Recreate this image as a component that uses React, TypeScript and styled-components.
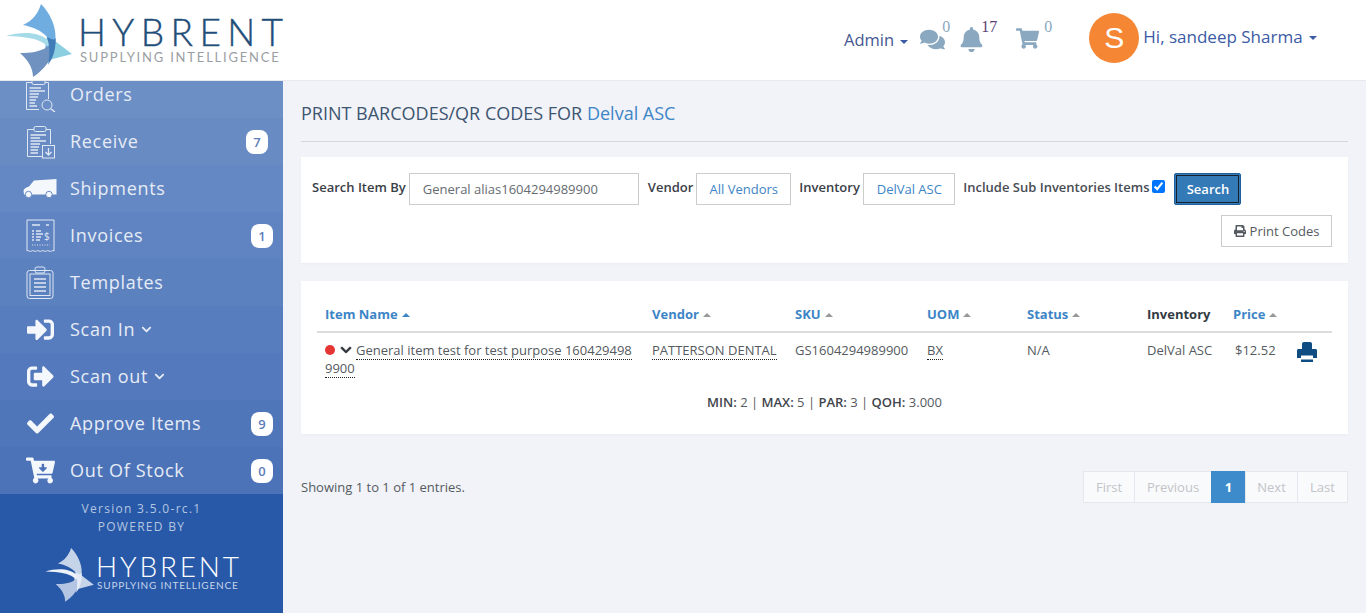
import React from "react";
import styled, { createGlobalStyle } from "styled-components";
import {
  FaBell,
  FaCartArrowDown,
  FaCheck,
  FaChevronDown,
  FaComments,
  FaPrint,
  FaShoppingCart,
  FaSignInAlt,
  FaSignOutAlt,
} from "react-icons/fa";

const GlobalStyle = createGlobalStyle`
  html, body {
    margin: 0;
    padding: 0;
    height: 100%;
    overflow: hidden;
    background: #f1f3f8;
    font-family: "Open Sans", "Liberation Sans", sans-serif;
  }
  * { box-sizing: border-box; }
`;

function LogoMark({ className, light }: { className?: string; light?: boolean }) {
  return (
    <svg className={className} viewBox="0 0 75 80">
      <path
        d="M41 4C50 13 56 26 55.500 38C55 47 50 52 44 55L47 37C42 31 33 27 23 25C32 21 38 14 41 4Z"
        fill={light ? "#c6d4ea" : "#6fade0"}
      />
      <path
        d="M6 36C22 31 40 32 49 41C54 46 56 52 56 58C52 48 44 42 34 39C25 37 15 36 6 36Z"
        fill={light ? "#eef2f9" : "#a5dbe8"}
      />
      <path
        d="M55 41L72 54L49 60C51 54 54 47 55 41Z"
        fill={light ? "#c6d4ea" : "#8ccfe0"}
      />
      <path
        d="M20 53C30 53 40 52 47 47C52 43 55 40 55.500 38C56 50 50 66 33 77C33 68 28 60 20 53Z"
        fill={light ? "#b3c5e2" : "#6f92c0"}
      />
      <path
        d="M47 37C51 39 54 41 55.500 38C56 50 53 58 48 65C50 56 50 46 47 37Z"
        fill={light ? "#e4ebf6" : "#3f7cb8"}
      />
    </svg>
  );
}

function OrdersIcon() {
  return (
    <svg width="31" height="34" viewBox="0 0 31 34" fill="none" stroke="#dfe7f4" strokeWidth="1">
      <path d="M23.500 21V4.500H20M7 4.500H1.500V31.500H14" />
      <rect x="7" y="2" width="13" height="4.500" rx="1.500" />
      <path d="M4.500 10H16M4.500 13H20M4.500 16H14M4.500 19H13M4.500 22H11M4.500 25H10M4.500 28H12" strokeWidth="1.400" />
      <circle cx="22" cy="27" r="5" />
      <path d="M25.500 30.500L30 34" strokeWidth="1.500" />
    </svg>
  );
}

function ReceiveIcon() {
  return (
    <svg width="29" height="34" viewBox="0 0 29 34" fill="none" stroke="#dfe7f4" strokeWidth="1">
      <path d="M24.500 19V4.500H20M8 4.500H1.500V31.500H16" />
      <rect x="8" y="1.500" width="12" height="5" rx="1.500" />
      <path d="M4.500 10H20M4.500 13H14M4.500 16H20M4.500 19H14M4.500 22H13M4.500 25H12M4.500 28H12" strokeWidth="1.400" />
      <rect x="16.500" y="20.500" width="12" height="12.500" />
      <path d="M22.500 23V30M19.500 27L22.500 30L25.500 27" strokeWidth="1.300" />
    </svg>
  );
}

function InvoiceIcon() {
  return (
    <svg width="29" height="34" viewBox="0 0 29 34" fill="none" stroke="#dfe7f4" strokeWidth="1">
      <path d="M1 32V1H28V32C26 30.500 25 33.500 23 32C21 30.500 20 33.500 18 32C16 30.500 15 33.500 13 32C11 30.500 10 33.500 8 32C6 30.500 5 33.500 3 32C2 31.500 1.500 31.500 1 32Z" />
      <path d="M6 6H14M20 6H23" strokeWidth="1.400" />
      <path d="M6 12H8M10 12H15M6 15H8M10 15H17M6 18H8M10 18H15M6 21H8M10 21H14" strokeWidth="1.300" />
      <path d="M6 26H24" strokeDasharray="1 1.500" />
      <text x="18" y="21" fontSize="10" fill="#dfe7f4" stroke="none" fontFamily="Open Sans">$</text>
    </svg>
  );
}

function TemplateIcon() {
  return (
    <svg width="28" height="34" viewBox="0 0 28 34" fill="none" stroke="#dfe7f4" strokeWidth="1">
      <rect x="1" y="4.500" width="26" height="28" rx="2.500" />
      <rect x="4" y="8" width="20" height="21.500" />
      <rect x="9" y="1" width="10" height="6" rx="2" />
      <path d="M8 13H20M8 17H20M8 21H20M8 25H20" strokeWidth="1.400" />
    </svg>
  );
}

function VanIcon() {
  return (
    <svg width="34" height="19" viewBox="0 0 34 19">
      <path d="M11 1.500L33.500 0V15.500H1L0.500 11.500C1 9.500 3 8.500 6 7.500L11 1.500Z" fill="#f4f7fb" />
      <circle cx="5.500" cy="15.500" r="3.200" fill="#f4f7fb" stroke="#6a8cc2" />
      <circle cx="26" cy="15.500" r="3.200" fill="#f4f7fb" stroke="#6a8cc2" />
    </svg>
  );
}

function SolidPrinter({ className }: { className?: string }) {
  return (
    <svg className={className} viewBox="0 0 20 20">
      <path d="M5 7V2C5 .800 5.800 0 7 0H13C14.200 0 15 .800 15 2V7Z" />
      <path d="M1.500 7H18.500C19.400 7 20 7.600 20 8.500V16H16V13.500H4V16H0V8.500C0 7.600 .600 7 1.500 7Z" />
      <path d="M4 17.500H16V20H4Z" />
    </svg>
  );
}

type NavEntry = {
  label: string;
  icon: React.ReactNode;
  chevron?: boolean;
  badge?: string;
  badgeInset?: number;
};

const navEntries: NavEntry[] = [
  { label: "Orders", icon: <OrdersIcon /> },
  { label: "Receive", icon: <ReceiveIcon />, badge: "7", badgeInset: 15 },
  { label: "Shipments", icon: <VanIcon /> },
  { label: "Invoices", icon: <InvoiceIcon />, badge: "1" },
  { label: "Templates", icon: <TemplateIcon /> },
  { label: "Scan In", icon: <FaSignInAlt size={27} />, chevron: true },
  { label: "Scan out", icon: <FaSignOutAlt size={27} />, chevron: true },
  { label: "Approve Items", icon: <FaCheck size={27} />, badge: "9" },
  { label: "Out Of Stock", icon: <FaCartArrowDown size={29} />, badge: "0" },
];

const columns = [
  { title: "Item Name", width: 327, sort: "active" },
  { title: "Vendor", width: 143, sort: "idle" },
  { title: "SKU", width: 132, sort: "idle" },
  { title: "UOM", width: 100, sort: "idle" },
  { title: "Status", width: 120, sort: "idle" },
  { title: "Inventory", width: 86, sort: "none" },
  { title: "Price", width: 64, sort: "idle" },
  { title: "", width: 43, sort: "none" },
];

const pages = [
  { label: "First", width: 52 },
  { label: "Previous", width: 78 },
  { label: "1", width: 35, active: true },
  { label: "Next", width: 53 },
  { label: "Last", width: 51 },
];

export default function App() {
  return (
    <>
      <GlobalStyle />
      <Page>
        <Header>
          <Brand>
            <HeaderMark />
            <BrandText>
              <BrandName>HYBRENT</BrandName>
              <BrandTag>SUPPLYING INTELLIGENCE</BrandTag>
            </BrandText>
          </Brand>
          <HeaderTools>
            <AdminMenu>
              Admin <Caret />
            </AdminMenu>
            <CommentsTool>
              <FaComments size={25} />
              <ToolCount>0</ToolCount>
            </CommentsTool>
            <ToolIcon>
              <FaBell size={25} />
              <ToolCount $dark>17</ToolCount>
            </ToolIcon>
            <CartTool>
              <FaShoppingCart size={23} />
              <ToolCount>0</ToolCount>
            </CartTool>
            <Avatar>S</Avatar>
            <UserMenu>
              Hi, sandeep Sharma <Caret />
            </UserMenu>
          </HeaderTools>
        </Header>
        <Body>
          <Sidebar>
            <NavClip>
              <NavList>
                {navEntries.map((entry, i) => (
                  <NavItem key={entry.label} $step={i}>
                    <NavIcon>{entry.icon}</NavIcon>
                    <NavLabel>{entry.label}</NavLabel>
                    {entry.chevron ? <NavChevron /> : null}
                    {entry.badge ? <NavBadge $inset={entry.badgeInset ?? 10}>{entry.badge}</NavBadge> : null}
                  </NavItem>
                ))}
              </NavList>
            </NavClip>
            <SideFooter>
              <VersionLine>Version 3.5.0-rc.1</VersionLine>
              <VersionLine>POWERED BY</VersionLine>
              <FooterBrand>
                <FooterMark light />
                <BrandText>
                  <FooterName>HYBRENT</FooterName>
                  <FooterTag>SUPPLYING INTELLIGENCE</FooterTag>
                </BrandText>
              </FooterBrand>
            </SideFooter>
          </Sidebar>
          <Main>
            <Title>
              PRINT BARCODES/QR CODES FOR <TitleLink>Delval ASC</TitleLink>
            </Title>
            <Divider />
            <SearchPanel>
              <SearchRow>
                <FieldLabel>Search Item By</FieldLabel>
                <SearchInput readOnly value="General alias1604294989900" />
                <FieldLabel>Vendor</FieldLabel>
                <PickerButton $width={95}>All Vendors</PickerButton>
                <InventoryLabel>Inventory</InventoryLabel>
                <PickerButton $width={92}>DelVal ASC</PickerButton>
                <IncludeLabel>Include Sub Inventories Items</IncludeLabel>
                <IncludeCheck type="checkbox" defaultChecked />
                <SearchButton>Search</SearchButton>
              </SearchRow>
              <PrintRow>
                <PrintButton>
                  <FaPrint size={12} /> Print Codes
                </PrintButton>
              </PrintRow>
            </SearchPanel>
            <TablePanel>
              <ItemsTable>
                <colgroup>
                  {columns.map((col, i) => (
                    <col key={i} width={col.width} />
                  ))}
                </colgroup>
                <thead>
                  <tr>
                    {columns.map((col, i) => (
                      <HeadCell key={i} $plain={col.sort === "none"}>
                        {col.title}
                        {col.sort !== "none" ? <SortArrow $active={col.sort === "active"} /> : null}
                      </HeadCell>
                    ))}
                  </tr>
                </thead>
                <tbody>
                  <tr>
                    <BodyCell>
                      <StatusDot />
                      <RowChevron />
                      <Dotted>General item test for test purpose 1604294989900</Dotted>
                    </BodyCell>
                    <BodyCell>
                      <Dotted>PATTERSON DENTAL</Dotted>
                    </BodyCell>
                    <BodyCell>GS1604294989900</BodyCell>
                    <BodyCell>
                      <Dotted>BX</Dotted>
                    </BodyCell>
                    <BodyCell>N/A</BodyCell>
                    <BodyCell>DelVal ASC</BodyCell>
                    <PriceCell>$12.52</PriceCell>
                    <BodyCell>
                      <RowPrint />
                    </BodyCell>
                  </tr>
                  <tr>
                    <SummaryCell colSpan={8}>
                      <b>MIN:</b> 2 | <b>MAX:</b> 5 | <b>PAR:</b> 3 | <b>QOH:</b> 3.000
                    </SummaryCell>
                  </tr>
                </tbody>
              </ItemsTable>
            </TablePanel>
            <ListFooter>
              <span>Showing 1 to 1 of 1 entries.</span>
              <Pager>
                {pages.map((page) => (
                  <PageCell key={page.label} $active={page.active} $width={page.width}>
                    {page.label}
                  </PageCell>
                ))}
              </Pager>
            </ListFooter>
          </Main>
        </Body>
      </Page>
    </>
  );
}

const Page = styled.div`
  width: 1366px;
  height: 613px;
  display: flex;
  flex-direction: column;
  overflow: hidden;
`;

const Header = styled.header`
  flex: 0 0 81px;
  display: flex;
  justify-content: space-between;
  background: #ffffff;
  border-bottom: 1px solid #e8e9ec;
`;

const Brand = styled.div`
  width: 283px;
  display: flex;
  align-items: flex-start;
  position: relative;
  z-index: 2;
`;

const HeaderMark = styled(LogoMark)`
  width: 75px;
  height: 80px;
  flex: none;
  margin-right: 3px;
`;

const BrandText = styled.div`
  display: flex;
  flex-direction: column;
  white-space: nowrap;
`;

const BrandName = styled.div`
  font-family: Lato, "Open Sans", sans-serif;
  font-weight: 300;
  font-size: 37px;
  line-height: 30px;
  letter-spacing: 6.4px;
  color: #1f4e79;
  margin-top: 17px;
  -webkit-text-stroke: 0.4px #1f4e79;
`;

const BrandTag = styled.div`
  font-family: Lato, "Open Sans", sans-serif;
  font-size: 13px;
  line-height: 14px;
  letter-spacing: 1.8px;
  color: #9a9ea3;
  margin: 3px 0 0 2px;
`;

const HeaderTools = styled.div`
  display: flex;
  align-items: flex-start;
  padding-right: 49px;
`;

const Caret = styled.i`
  display: inline-block;
  width: 0;
  height: 0;
  margin-left: 2px;
  vertical-align: middle;
  border-top: 4px solid #3b5ba5;
  border-left: 4px solid transparent;
  border-right: 4px solid transparent;
`;

const AdminMenu = styled.div`
  margin-top: 29px;
  font-size: 16.5px;
  line-height: 22px;
  color: #44588f;
  white-space: nowrap;
`;

const ToolIcon = styled.div`
  display: flex;
  align-items: flex-start;
  margin: 27px 0 0 9px;
  color: #8aa8c0;
  height: 25px;
`;

const CommentsTool = styled(ToolIcon)`
  margin-left: 12px;
`;

const CartTool = styled(ToolIcon)`
  margin-left: 19px;

  & > span {
    margin-left: 5px;
  }
`;

const ToolCount = styled.span<{ $dark?: boolean }>`
  font-family: "Liberation Serif", serif;
  font-size: 16px;
  line-height: 16px;
  margin-top: -8px;
  margin-left: -3px;
  color: ${(p) => (p.$dark ? "#5b3f72" : "#8aa8c0")};
`;

const Avatar = styled.div`
  width: 50px;
  height: 50px;
  margin: 13px 0 0 37px;
  border-radius: 50%;
  background: #f58634;
  color: #ffffff;
  font-family: "Liberation Sans", sans-serif;
  font-size: 30px;
  display: flex;
  align-items: center;
  justify-content: center;
`;

const UserMenu = styled.div`
  margin: 26px 0 0 4px;
  font-size: 17px;
  line-height: 22px;
  color: #3b5ba5;
  white-space: nowrap;
`;

const Body = styled.div`
  flex: 1;
  display: flex;
  min-height: 0;
`;

const Sidebar = styled.aside`
  width: 283px;
  flex: none;
  display: flex;
  flex-direction: column;
`;

const NavClip = styled.nav`
  height: 413px;
  overflow: hidden;
`;

const NavList = styled.div`
  margin-top: -10px;
`;

const NavItem = styled.div<{ $step: number }>`
  position: relative;
  height: 47px;
  display: flex;
  align-items: center;
  padding-left: 23px;
  color: #e6ecf6;
  font-size: 18px;
  letter-spacing: 0.7px;
  background: ${(p) => `rgb(${108 - p.$step * 4}, ${143 - p.$step * 3.6}, ${198 - p.$step * 1.7})`};
`;

const NavIcon = styled.div`
  width: 34px;
  height: 34px;
  margin-right: 13px;
  display: flex;
  align-items: center;
  justify-content: center;
  color: #f4f7fb;
`;

const NavLabel = styled.span`
  line-height: 24px;
  margin-top: -2px;
`;

const NavChevron = styled(FaChevronDown)`
  width: 11px;
  height: 11px;
  margin-left: 6px;
`;

const NavBadge = styled.span<{ $inset: number }>`
  position: absolute;
  right: ${(p) => p.$inset}px;
  top: 12px;
  width: 22px;
  height: 24px;
  border-radius: 8px;
  background: #ffffff;
  color: #5d80ba;
  font-size: 13px;
  font-weight: 600;
  letter-spacing: 0;
  display: flex;
  align-items: center;
  justify-content: center;
`;

const SideFooter = styled.div`
  flex: 1;
  background: #2859a8;
  padding-top: 6px;
  text-align: center;
`;

const VersionLine = styled.div`
  font-size: 12px;
  line-height: 18px;
  letter-spacing: 1.3px;
  color: #b4c6e0;
`;

const FooterBrand = styled.div`
  display: flex;
  align-items: flex-start;
  margin: 9px 0 0 41px;
  text-align: left;
`;

const FooterMark = styled(LogoMark)`
  width: 55px;
  height: 59px;
  flex: none;
`;

const FooterName = styled.div`
  font-family: Lato, "Open Sans", sans-serif;
  font-weight: 300;
  font-size: 28px;
  line-height: 28px;
  letter-spacing: 2.8px;
  color: #ffffff;
  margin-top: 7px;
`;

const FooterTag = styled.div`
  font-family: Lato, "Open Sans", sans-serif;
  font-size: 10px;
  line-height: 11px;
  letter-spacing: 0.8px;
  color: #c6d4ea;
  margin: 0 0 0 1px;
`;

const Main = styled.main`
  flex: 1;
  min-width: 0;
  padding: 0 18px;
`;

const Title = styled.h1`
  margin: 19px 0 0;
  font-size: 18px;
  line-height: 26px;
  font-weight: 400;
  color: #3e5570;
`;

const TitleLink = styled.span`
  color: #3d85c6;
`;

const Divider = styled.hr`
  margin: 15px 0 15px;
  border: 0;
  border-top: 1px solid #d5d7dc;
`;

const SearchPanel = styled.section`
  height: 106px;
  padding: 16px 16px 0 11px;
  background: #ffffff;
  box-shadow: 0 1px 2px rgba(0, 0, 0, 0.03);
`;

const SearchRow = styled.div`
  display: flex;
  align-items: flex-start;
  height: 32px;
  font-size: 13px;
`;

const FieldLabel = styled.label`
  margin: 5px 3px 0 0;
  line-height: 18px;
  font-weight: 600;
  color: #3a4048;
  white-space: nowrap;
  font-size: 13px;
`;

const InventoryLabel = styled(FieldLabel)`
  width: 61px;
  margin-right: 3px;
`;

const SearchInput = styled.input`
  width: 230px;
  height: 32px;
  margin-right: 9px;
  padding: 0 13px;
  border: 1px solid #cccccc;
  outline: 0;
  font: 13px "Open Sans", sans-serif;
  color: #666b70;
`;

const PickerButton = styled.button<{ $width: number }>`
  width: ${(p) => p.$width}px;
  height: 32px;
  margin-right: 8px;
  padding: 0;
  border: 1px solid #cccccc;
  background: #ffffff;
  font: 13px "Open Sans", sans-serif;
  color: #3d85c6;
  white-space: nowrap;
`;

const IncludeLabel = styled(FieldLabel)`
  color: #474c53;
`;

const IncludeCheck = styled.input`
  width: 13px;
  height: 13px;
  margin: 7px 9px 0 0;
  flex: none;
`;

const SearchButton = styled.button`
  width: 67px;
  height: 32px;
  border: 1px solid #1f5f9a;
  outline: 1.5px solid #14202c;
  outline-offset: -3px;
  border-radius: 2px;
  background: #337ab7;
  color: #ffffff;
  font: 600 13px "Open Sans", sans-serif;
`;

const PrintRow = styled.div`
  display: flex;
  justify-content: flex-end;
  margin-top: 10px;
`;

const PrintButton = styled.button`
  width: 111px;
  height: 32px;
  border: 1px solid #cccccc;
  background: #ffffff;
  font: 13px "Open Sans", sans-serif;
  color: #555a60;
  display: flex;
  align-items: center;
  justify-content: center;
  gap: 4px;
`;

const TablePanel = styled.section`
  height: 153px;
  margin-top: 18px;
  padding: 16px 16px 0;
  background: #ffffff;
  box-shadow: 0 1px 2px rgba(0, 0, 0, 0.03);
`;

const ItemsTable = styled.table`
  width: 1015px;
  table-layout: fixed;
  border-collapse: collapse;
  font-size: 13px;
`;

const HeadCell = styled.th<{ $plain?: boolean }>`
  height: 35px;
  padding: 0 8px;
  text-align: left;
  font-weight: 700;
  white-space: nowrap;
  color: ${(p) => (p.$plain ? "#333b44" : "#3d85c6")};
  border-bottom: 2px solid #dddddd;
`;

const SortArrow = styled.i<{ $active?: boolean }>`
  display: inline-block;
  width: 0;
  height: 0;
  margin-left: 4px;
  vertical-align: 2px;
  border-bottom: 4px solid ${(p) => (p.$active ? "#3d85c6" : "#999999")};
  border-left: 4px solid transparent;
  border-right: 4px solid transparent;
`;

const BodyCell = styled.td`
  padding: 8px 8px 9px;
  line-height: 18px;
  vertical-align: top;
  color: #555a60;
  word-break: break-all;
`;

const PriceCell = styled(BodyCell)`
  padding-left: 10px;
  padding-right: 0;
`;

const StatusDot = styled.i`
  display: inline-block;
  width: 10px;
  height: 10px;
  margin-right: 5px;
  border-radius: 50%;
  background: #e53535;
`;

const RowChevron = styled(FaChevronDown)`
  width: 12px;
  height: 12px;
  margin-right: 4px;
  vertical-align: -1px;
  color: #2d3238;
  stroke: currentColor;
  stroke-width: 24px;
`;

const RowPrint = styled(SolidPrinter)`
  display: block;
  width: 20px;
  height: 20px;
  margin-top: 1px;
  fill: #0f4c81;
`;

const Dotted = styled.span`
  border-bottom: 1px dotted #222222;
`;

const SummaryCell = styled.td`
  padding: 7px 0 0;
  text-align: center;
  line-height: 18px;
  color: #555a60;

  & > b {
    font-weight: 600;
    color: #3f454c;
  }
`;

const ListFooter = styled.div`
  display: flex;
  justify-content: space-between;
  align-items: center;
  margin-top: 37px;
  font-size: 13px;
  color: #555a60;
`;

const Pager = styled.div`
  display: flex;
`;

const PageCell = styled.span<{ $active?: boolean; $width: number }>`
  width: ${(p) => p.$width}px;
  height: 32px;
  margin-left: -1px;
  display: flex;
  align-items: center;
  justify-content: center;
  border: 1px solid ${(p) => (p.$active ? "#3d8bcb" : "#e4e7ed")};
  background: ${(p) => (p.$active ? "#3d8bcb" : "#f9fafc")};
  color: ${(p) => (p.$active ? "#ffffff" : "#c2c4c8")};
  font-weight: ${(p) => (p.$active ? 700 : 400)};
`;
